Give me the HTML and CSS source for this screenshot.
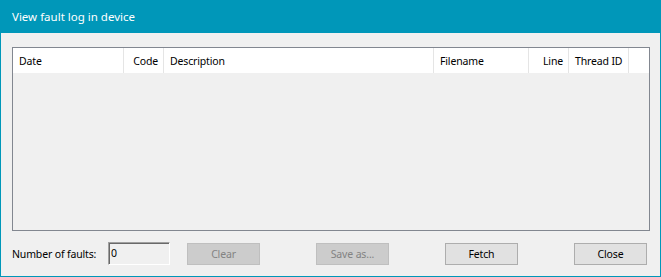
FILE: index.html
```html
<!DOCTYPE html>
<html>
<head>
<meta charset="utf-8">
<link rel="stylesheet" href="styles.css">
</head>
<body>
<div class="window">
  <div class="titlebar">View fault log in device</div>
  <div class="client">
    <div class="listview">
      <div class="header">
        <div class="col c-date">Date</div>
        <div class="col c-code right">Code</div>
        <div class="col c-desc">Description</div>
        <div class="col c-file">Filename</div>
        <div class="col c-line right">Line</div>
        <div class="col c-thread">Thread ID</div>
        <div class="col c-fill"></div>
      </div>
      <div class="rows"></div>
    </div>
    <div class="footer">
      <span class="label">Number of faults:</span>
      <div class="textbox">0</div>
      <button class="btn disabled b-clear">Clear</button>
      <button class="btn disabled b-save">Save as...</button>
      <button class="btn b-fetch">Fetch</button>
      <button class="btn b-close">Close</button>
    </div>
  </div>
</div>
</body>
</html>
```

FILE: styles.css
```css
* { box-sizing: border-box; }
html, body { margin: 0; padding: 0; }
body {
  width: 661px;
  height: 277px;
  font-family: "Noto Sans", "Open Sans", sans-serif;
  font-size: 10.5px;
  letter-spacing: -0.15px;
  color: #000;
  background: #f0f0f0;
}
.window {
  width: 661px;
  height: 277px;
  border: 1px solid #0097b9;
  border-top: none;
  background: #f0f0f0;
  display: flex;
  flex-direction: column;
}
.titlebar {
  height: 33px;
  margin: 0 -1px;
  background: #0097b9;
  color: #fff;
  padding-left: 12px;
  line-height: 33px;
  font-size: 11.5px;
  letter-spacing: 0;
}
.client {
  flex: 1;
  padding: 14px 10px 0 11px;
  display: flex;
  flex-direction: column;
}
.listview {
  width: 638px;
  height: 184px;
  border: 1px solid #828790;
  background: #f0f0f0;
  display: flex;
  flex-direction: column;
}
.header {
  display: flex;
  height: 25px;
  background: #fff;
}
.col {
  border-right: 1px solid #e5e5e5;
  padding: 1px 6px 0;
  line-height: 24px;
  white-space: nowrap;
  overflow: hidden;
}
.col.right { text-align: right; padding-right: 5px; }
.c-date { width: 111px; }
.c-code { width: 40px; }
.c-desc { width: 270px; }
.c-file { width: 95px; }
.c-line { width: 40px; }
.c-thread { width: 60px; }
.c-fill { flex: 1; border-right: none; }
.rows { flex: 1; }
.footer {
  display: flex;
  align-items: center;
  margin-top: 11px;
  height: 23px;
}
.label { width: 96px; white-space: nowrap; }
.textbox {
  width: 62px;
  height: 23px;
  border: 1px solid;
  border-color: #a0a0a0 #fff #fff #a0a0a0;
  box-shadow: inset 1px 1px 0 #696969;
  padding-left: 2px;
  line-height: 21px;
  background: #f0f0f0;
}
.btn {
  height: 22px;
  width: 73px;
  font: inherit;
  letter-spacing: inherit;
  color: #000;
  background: #e1e1e1;
  border: 1px solid #adadad;
  padding: 0;
  margin-top: 1px;
}
.btn.disabled {
  background: #cccccc;
  border-color: #bfbfbf;
  color: #838383;
}
.b-clear { margin-left: 17px; }
.b-save { margin-left: 56px; }
.b-fetch { margin-left: 56px; }
.b-close { margin-left: 56px; }
```
